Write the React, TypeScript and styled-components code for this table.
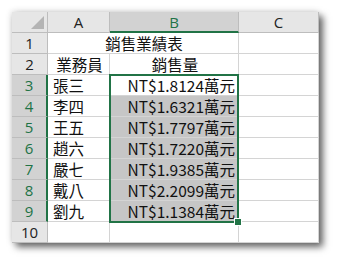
import React from 'react';
import styled, {createGlobalStyle} from 'styled-components';

const GREEN = '#217346';

const Global = createGlobalStyle`
  body {
    margin: 0;
    background: #fff;
    font-family: "Noto Sans CJK TC", "Noto Sans", sans-serif;
  }
`

const Page = styled.div`
  width: 340px;
  height: 265px;
  padding: 12px 0 0 12px;
  box-sizing: border-box;
`

const Sheet = styled.div`
  display: grid;
  grid-template-columns: 36px 62px 129px 80px;
  grid-template-rows: repeat(11, 21px);
  width: 307px;
  background: #fff;
  box-shadow: 4px 4px 7px rgba(0, 0, 0, 0.6), -1px -1px 6px rgba(0, 0, 0, 0.12);
  position: relative;
`

const Corner = styled.div`
  background: #e6e6e6;
  border-right: 1px solid #bdbdbd;
  border-bottom: 1px solid #bdbdbd;
  box-sizing: border-box;
  position: relative;

  &::after {
    content: '';
    position: absolute;
    right: 3px;
    bottom: 3px;
    border-style: solid;
    border-width: 0 0 13px 13px;
    border-color: transparent transparent #b4b4b4 transparent;
  }
`

const ColHead = styled.div<{ $active?: boolean }>`
  display: flex;
  align-items: center;
  justify-content: center;
  font-family: "Open Sans", "Noto Sans", sans-serif;
  font-size: 15px;
  background: ${p => p.$active ? '#d2d2d2' : '#e6e6e6'};
  color: ${p => p.$active ? GREEN : '#222'};
  border-right: 1px solid #bdbdbd;
  border-bottom: ${p => p.$active ? `2px solid ${GREEN}` : '1px solid #bdbdbd'};
  box-sizing: border-box;
`

const RowHead = styled.div<{ $active?: boolean }>`
  display: flex;
  align-items: center;
  justify-content: center;
  font-family: "Open Sans", "Noto Sans", sans-serif;
  font-size: 15px;
  background: ${p => p.$active ? '#d2d2d2' : '#e6e6e6'};
  color: ${p => p.$active ? GREEN : '#222'};
  border-right: ${p => p.$active ? `2px solid ${GREEN}` : '1px solid #bdbdbd'};
  border-bottom: 1px solid #bdbdbd;
  box-sizing: border-box;
`

const Cell = styled.div<{ $align?: 'left' | 'center' | 'right', $span?: number, $filled?: boolean }>`
  grid-column: span ${p => p.$span || 1};
  min-width: 0;
  padding: 0 3px 0 5px;
  font-size: 15.5px;
  line-height: 20px;
  text-align: ${p => p.$align || 'left'};
  color: #111;
  white-space: nowrap;
  background-color: ${p => p.$filled ? '#c6c6c6' : '#fff'};
  border-right: 1px solid #d4d4d4;
  border-bottom: 1px solid #d4d4d4;
  box-sizing: border-box;
  overflow: hidden;
`

// overlay over B3:B9; absolutely positioned so it takes no grid cell
const Selection = styled.div`
  position: absolute;
  grid-column: 3 / 4;
  grid-row: 4 / 11;
  top: -1px;
  left: -1px;
  right: 0;
  bottom: -1px;
  border: 2px solid ${GREEN};
  pointer-events: none;

  &::after {
    content: '';
    position: absolute;
    right: -5px;
    bottom: -5px;
    width: 6px;
    height: 6px;
    background: ${GREEN};
    border: 1px solid #fff;
  }
`

const people = [
  ['張三', '1.8124'],
  ['李四', '1.6321'],
  ['王五', '1.7797'],
  ['趙六', '1.7220'],
  ['嚴七', '1.9385'],
  ['戴八', '2.2099'],
  ['劉九', '1.1384'],
]

export default function App() {
  return (
    <Page>
      <Global/>
      <Sheet>
        <Corner/>
        <ColHead>A</ColHead>
        <ColHead $active>B</ColHead>
        <ColHead>C</ColHead>

        <RowHead>1</RowHead>
        <Cell $align="center" $span={2}>銷售業績表</Cell>
        <Cell/>

        <RowHead>2</RowHead>
        <Cell $align="center">業務員</Cell>
        <Cell $align="center">銷售量</Cell>
        <Cell/>

        {people.map(([name, amount], i) => (
          <React.Fragment key={name}>
            <RowHead $active>{i + 3}</RowHead>
            <Cell>{name}</Cell>
            <Cell $align="right" $filled={i > 0}>NT${amount}萬元</Cell>
            <Cell/>
          </React.Fragment>
        ))}

        <RowHead>10</RowHead>
        <Cell/>
        <Cell/>
        <Cell/>

        <Selection/>
      </Sheet>
    </Page>
  );
}
